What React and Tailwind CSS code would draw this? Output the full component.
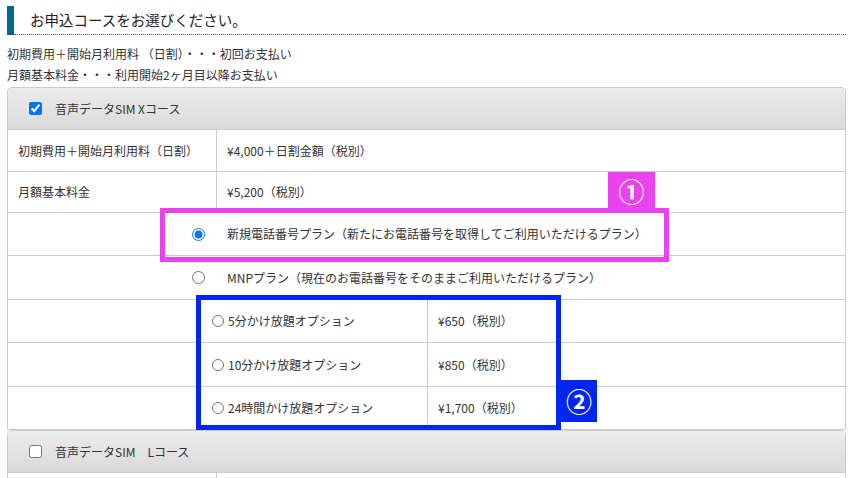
import React from 'react';

const font = { fontFamily: '"Noto Sans CJK JP", "Noto Sans", sans-serif' };

const options = [
  { label: '5分かけ放題オプション', price: '¥650（税別）', h: 'h-[43px]' },
  { label: '10分かけ放題オプション', price: '¥850（税別）', h: 'h-[44px]' },
  { label: '24時間かけ放題オプション', price: '¥1,700（税別）', h: 'h-[43px]' },
];

const CourseHeader = ({ checked, children }) => (
  <div className="h-[42px] border-b border-[#cccccc] rounded-t-[5px] bg-gradient-to-b from-[#ececec] to-[#dadada] flex items-center pl-[21px]">
    <input type="checkbox" defaultChecked={checked} className="w-[13px] h-[13px] m-0" />
    <span className="ml-[13px]">{children}</span>
  </div>
);

export default function App() {
  return (
    <div className="w-[855px] h-[478px] overflow-hidden bg-white text-[12px] text-[#333333]" style={font}>
      <div className="pt-[6px] pl-[7px] pr-[9px] relative">
        {/* 見出し */}
        <div className="flex">
          <div className="w-[7px] h-[29px] bg-[#006a8e]" />
          <div className="flex-1 h-[29px] border-b border-dotted border-[#0a6f93] flex items-center pl-[16px] text-[14.5px] text-[#222222]">
            お申込コースをお選びください。
          </div>
        </div>

        <div className="mt-[8px] leading-[21px]">
          <p>初期費用＋開始月利用料 （日割）・・・初回お支払い</p>
          <p>月額基本料金・・・利用開始2ヶ月目以降お支払い</p>
        </div>

        {/* Xコース */}
        <div className="mt-[2px] border-x border-t border-[#cccccc] rounded-t-[5px]">
          <CourseHeader checked>音声データSIM Xコース</CourseHeader>
          <div className="flex h-[42px] border-b border-[#cccccc]">
            <div className="w-[209px] border-r border-[#cccccc] flex items-center pl-[10px]">初期費用＋開始月利用料（日割）</div>
            <div className="flex-1 flex items-center pl-[10px]">¥4,000＋日割金額（税別）</div>
          </div>
          <div className="flex h-[41px] border-b border-[#cccccc]">
            <div className="w-[209px] border-r border-[#cccccc] flex items-center pl-[10px]">月額基本料金</div>
            <div className="flex-1 flex items-center pl-[10px]">¥5,200（税別）</div>
          </div>
          <div className="flex h-[43px] border-b border-[#cccccc] items-center pl-[184px]">
            <input type="radio" name="plan" defaultChecked className="w-[13px] h-[13px] m-0" />
            <span className="ml-[22px]">新規電話番号プラン（新たにお電話番号を取得してご利用いただけるプラン）</span>
          </div>
          <div className="flex h-[44px] border-b border-[#cccccc] items-center pl-[184px]">
            <input type="radio" name="plan" className="w-[13px] h-[13px] m-0" />
            <span className="ml-[22px]">MNPプラン（現在のお電話番号をそのままご利用いただけるプラン）</span>
          </div>
          {options.map((o) => (
            <div key={o.label} className={`flex ${o.h} border-b border-[#cccccc]`}>
              <div className="w-[419px] flex items-center pl-[204px]">
                <input type="radio" name="opt" className="w-[12px] h-[12px] m-0" />
                <span className="ml-[4px]">{o.label}</span>
              </div>
              <div className="flex-1 border-l border-[#cccccc] flex items-center pl-[10px]">{o.price}</div>
            </div>
          ))}
        </div>

        {/* Lコース */}
        <div className="border-x border-t border-[#cccccc] rounded-t-[5px]">
          <CourseHeader>音声データSIM　Lコース</CourseHeader>
          <div className="flex h-[42px]">
            <div className="w-[209px] border-r border-[#cccccc]" />
          </div>
        </div>

        {/* 注釈 ① */}
        <div className="absolute left-[160px] top-[208px] w-[509px] h-[54px] border-[5px] border-[#ea42ee]" />
        <div className="absolute left-[608px] top-[172px] w-[47px] h-[37px] bg-[#ea42ee] text-white text-[26px] font-bold leading-none flex items-center justify-center">①</div>

        {/* 注釈 ② */}
        <div className="absolute left-[196px] top-[295px] w-[365px] h-[135px] border-[5px] border-[#0026f0]" />
        <div className="absolute left-[561px] top-[380px] w-[36px] h-[42px] bg-[#0026f0] text-white text-[26px] font-bold leading-none flex items-center justify-center">②</div>
      </div>
    </div>
  );
}
